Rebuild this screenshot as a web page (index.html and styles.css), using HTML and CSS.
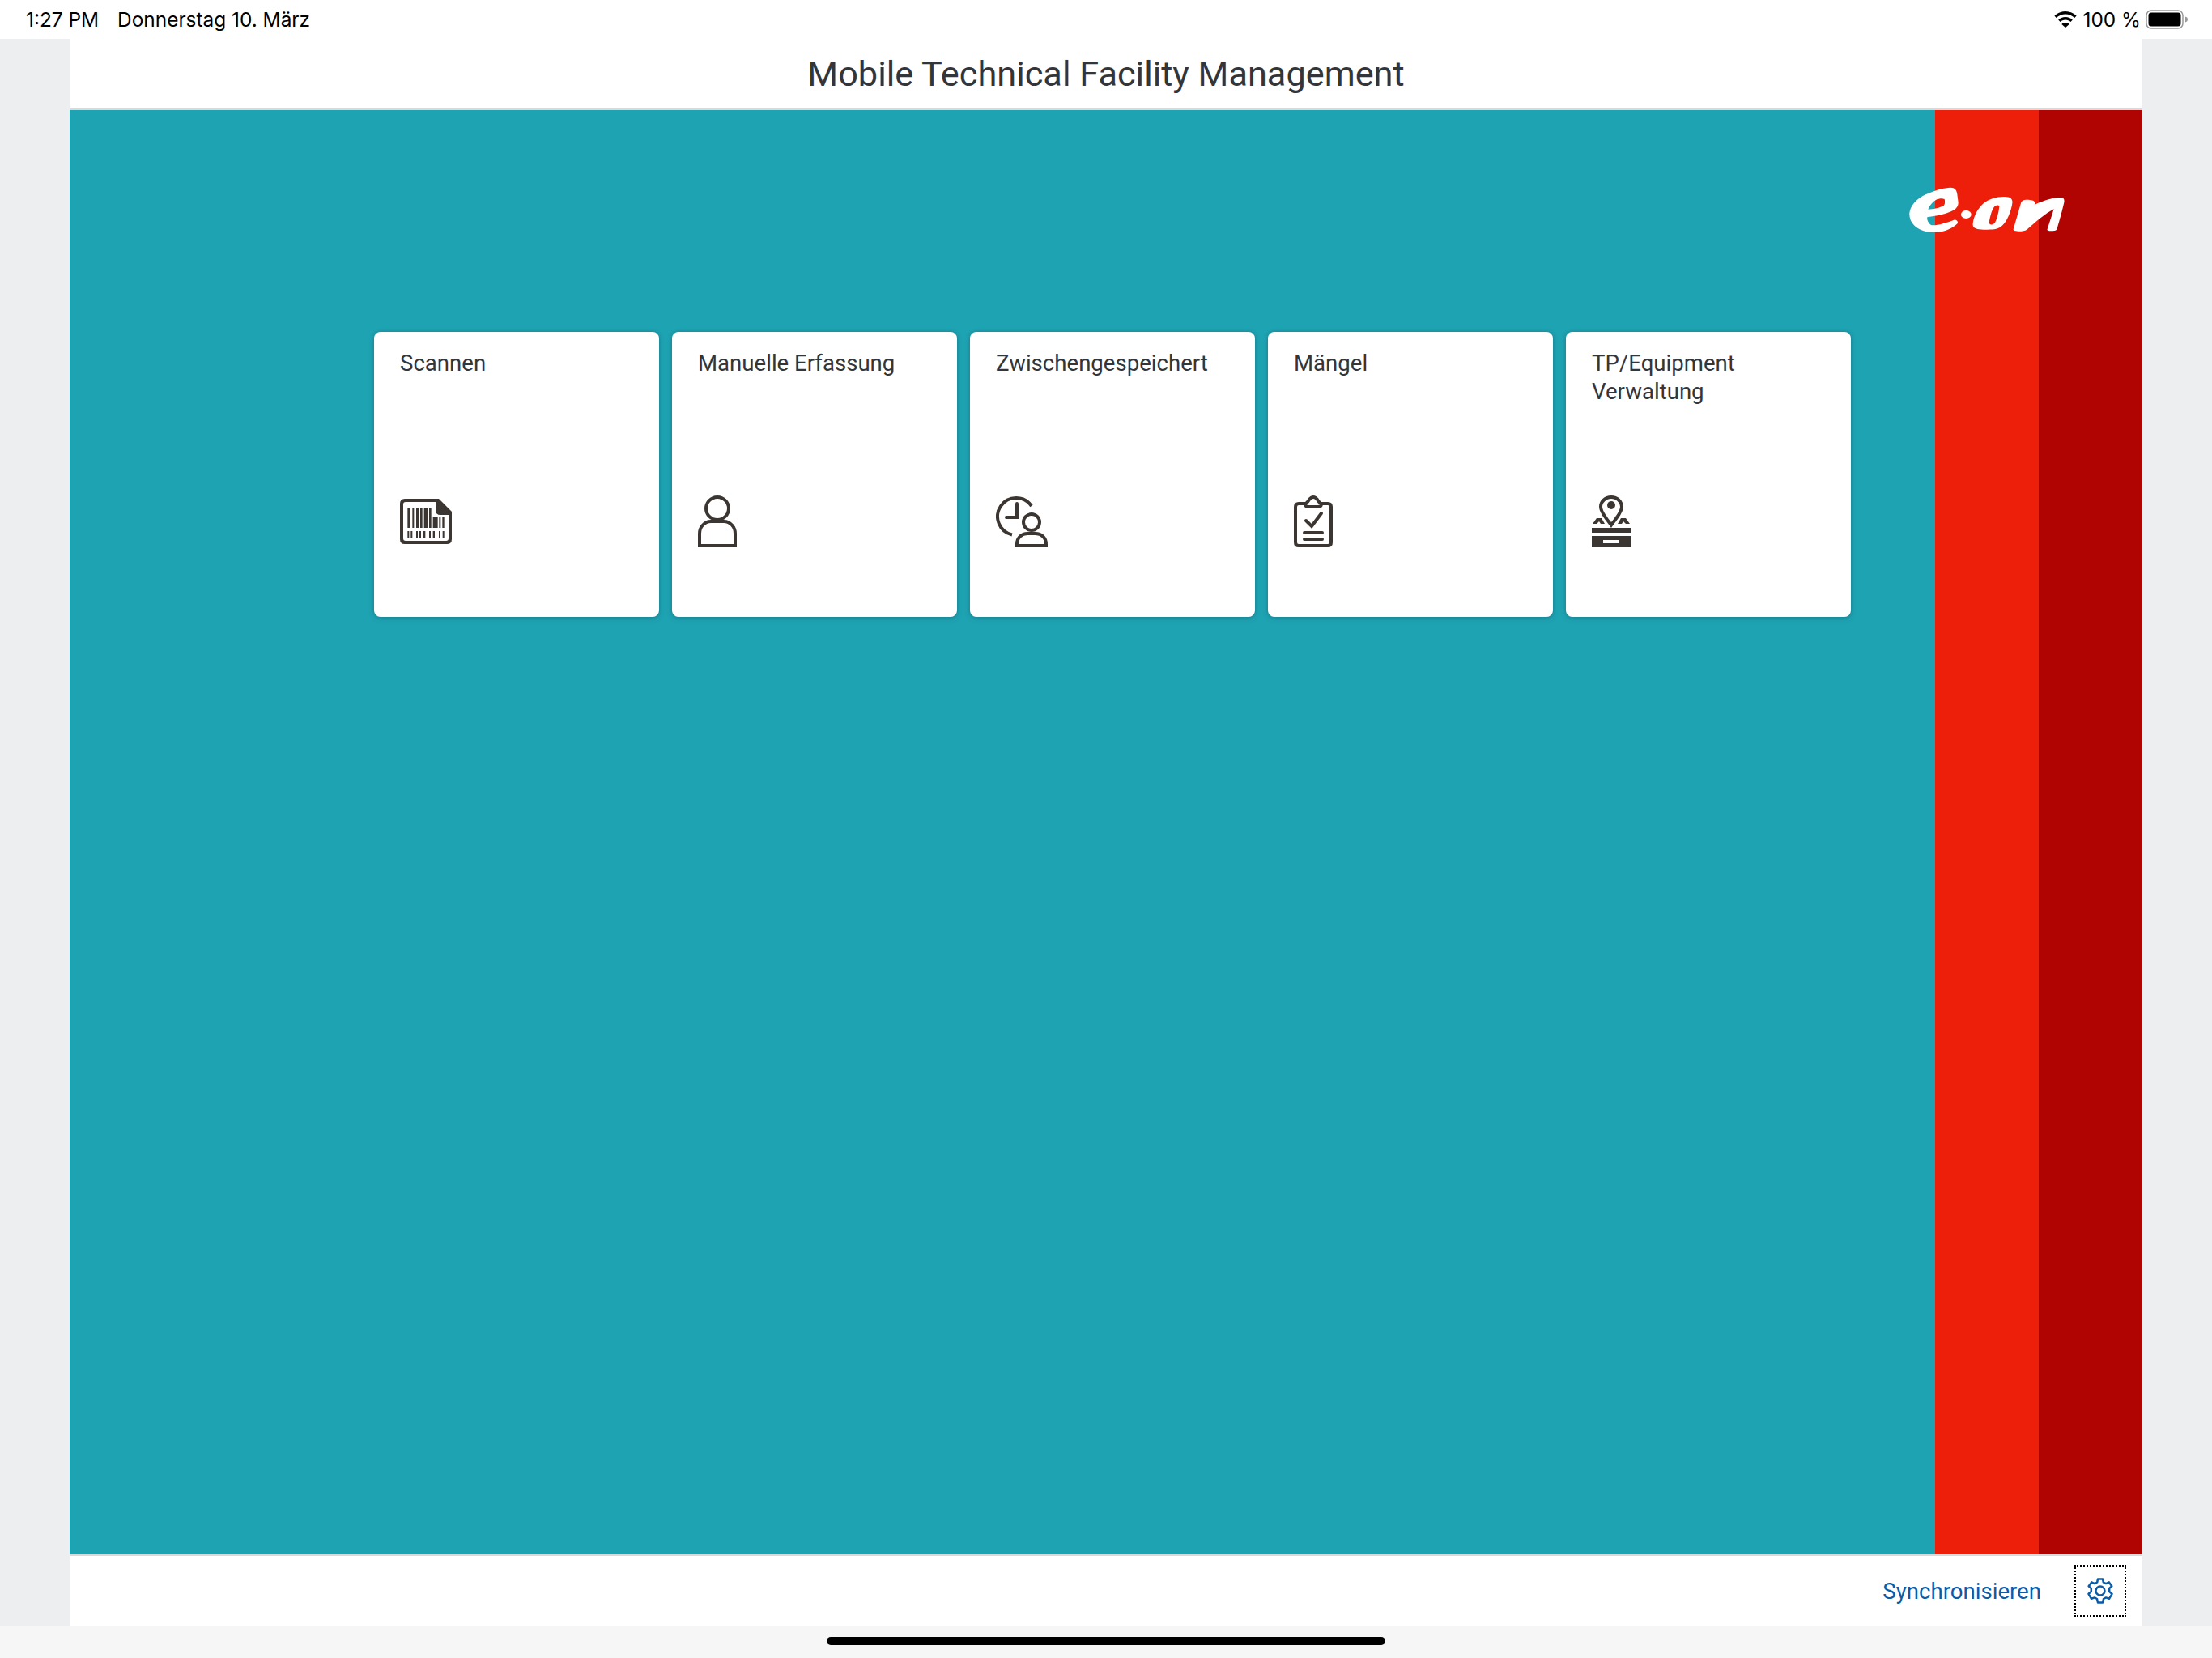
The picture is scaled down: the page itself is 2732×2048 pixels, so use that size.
FILE: index.html
```html
<!DOCTYPE html>
<html lang="de">
<head>
<meta charset="utf-8">
<title>Mobile Technical Facility Management</title>
<link rel="stylesheet" href="styles.css">
</head>
<body>
<div class="status">
  <div class="status-left"><span>1:27 PM</span><span>Donnerstag 10. März</span></div>
  <div class="status-right">
    <svg class="wifi" viewBox="0 0 28 20"><path d="M14 0C8.6 0 3.9 2.2.4 5.6l2.3 2.5C5.600 5.200 9.600 3.500 14 3.500s8.400 1.700 11.300 4.600l2.300-2.500C24.100 2.200 19.400 0 14 0z"/><path d="M14 7c-3.500 0-6.500 1.400-8.800 3.600l2.300 2.500C9.200 11.500 11.500 10.500 14 10.500s4.800 1 6.500 2.600l2.300-2.500C20.500 8.400 17.500 7 14 7z"/><path d="M14 14c-1.900 0-3.500.7-4.700 1.900L14 20l4.700-4.100C17.500 14.700 15.900 14 14 14z"/></svg>
    <span class="battery-pct">100 %</span>
    <svg class="battery" viewBox="0 0 52 24"><rect x="1" y="1" width="45" height="22" rx="6" fill="#fff" stroke="#999" stroke-width="1.500"/><rect x="3.500" y="3.500" width="40" height="17" rx="3.500" fill="#000"/><path d="M49 8.500c1.800.6 3 1.900 3 3.500s-1.200 2.900-3 3.500z" fill="#999"/></svg>
  </div>
</div>

<div class="frame">
  <div class="app">
    <header class="app-header">Mobile Technical Facility Management</header>
    <main class="stage">
      <div class="teal">
        <a class="tile"><div class="tile-title">Scannen</div>
          <div class="tile-icon">
            <svg class="i-barcode" viewBox="132 648 192 168"><path fill-rule="evenodd" d="M150 648H276L324 696V798Q324 816 306 816H150Q132 816 132 798V666Q132 648 150 648ZM153 660Q144 660 144 669V795Q144 804 153 804H303Q312 804 312 795V708H282Q264 708 264 690V660Z"/><path d="M160 684h10v72h-10zM178 684h6v72h-6zM192 684h9v72h-9zM207 684h8v72h-8zM221 684h14v72h-14zM240 684h8v72h-8zM254 717h18v39h-18zM277 717h6v39h-6zM289 717h7v39h-7zM160 768h6v24h-6zM172 768h6v24h-6zM192 768h6v24h-6zM204 768h6v24h-6zM219 768h7v24h-7zM240 768h6v24h-6zM254 768h7v24h-7zM276 768h6v24h-6zM290 768h6v24h-6z"/></svg>
          </div></a>
        <a class="tile"><div class="tile-title">Manuelle Erfassung</div>
          <div class="tile-icon">
            <svg class="i-std i-48" viewBox="0 0 48 64"><circle cx="24" cy="16" r="14"/><path d="M2 62V47C2 39 8 32 16 32H32C40 32 46 39 46 47V62Z"/></svg>
          </div></a>
        <a class="tile"><div class="tile-title">Zwischengespeichert</div>
          <div class="tile-icon">
            <svg class="i-std i-64" viewBox="0 0 64 64"><path d="M44 13A23 23 0 1 0 20 48.500"/><path d="M26 10V27H13" stroke-linecap="round"/><circle cx="44" cy="33" r="10"/><path d="M26 62V60C26 52 32 47 39 47H49C56 47 62 52 62 60V62Z"/></svg>
          </div></a>
        <a class="tile"><div class="tile-title">Mängel</div>
          <div class="tile-icon">
            <svg class="i-std i-48" viewBox="0 0 48 64"><path d="M14 10H6Q2 10 2 14V58Q2 62 6 62H42Q46 62 46 58V14Q46 10 42 10H34"/><path d="M14 10C16 10 17 8 19 5C22 1 26 1 29 5C31 8 32 10 34 10C34 13 32 14 30 14H18C16 14 14 13 14 10Z"/><path d="M15 31L22 38L34 22" stroke-linecap="round"/><path d="M13 46H35M13 54H35" stroke-linecap="round"/></svg>
          </div></a>
        <a class="tile"><div class="tile-title">TP/Equipment Verwaltung</div>
          <div class="tile-icon">
            <svg class="i-pin" viewBox="0 0 48 64"><path fill-rule="evenodd" d="M24 0C15.700 0 9 6 9 14C9 22 20 34 24 40C28 34 39 22 39 14C39 6 32.300 0 24 0ZM24 4C29.800 4 35 8.500 35 14C35 19 28 28 24 33C20 28 13 19 13 14C13 8.500 18.200 4 24 4Z"/><circle cx="24" cy="12" r="5"/><path d="M1 35L6 28H12L16 35H11L9 32L6 35ZM47 35L42 28H36L32 35H37L39 32L42 35Z"/><path d="M0 40H48V46H0Z"/><path fill-rule="evenodd" d="M0 50H48V64H0ZM14 55V59H33V55Z"/></svg>
          </div></a>
      </div>
      <div class="stripe-red"></div>
      <div class="stripe-dark"></div>
      <svg class="logo" viewBox="0 0 660 255"><path fill-rule="evenodd" d="M55 145C58 118 80 92 115 76C145 62 175 52 205 50C222 49 230 58 232 75L236 105C236 118 230 128 215 136C195 147 160 155 121 160C119 168 124 182 135 189C150 193 190 182 220 170C228 168 236 176 234 182C215 200 190 213 155 216C120 218 90 208 72 190C60 178 54 162 55 145ZM124 131C143 131 168 125 182 117C187 113 187 100 185 93C178 89 165 90 154 95C141 102 130 116 124 131Z"/><ellipse cx="265" cy="150" rx="19" ry="15"/><path fill-rule="evenodd" d="M290 185C292 160 305 130 330 108C352 90 385 82 410 84C430 85 438 92 436 108C432 135 420 170 400 190C385 206 360 207 330 206C305 205 288 203 290 185ZM350 180C350 190 366 190 372 180C380 165 386 140 388 120C385 113 373 115 368 123C360 135 354 155 350 180Z"/><path d="M440 205L468 108C471 98 478 95 490 95C505 95 520 97 520 108L518 115C540 102 590 85 618 87C627 88 630 95 628 105C620 140 610 175 601 205C600 210 590 211 580 211C570 211 564 210 566 204L590 130C560 145 520 180 490 206C475 216 438 213 440 205Z"/></svg>
    </main>
    <footer class="app-footer">
      <a class="sync">Synchronisieren</a>
      <span class="gear-btn">
        <svg class="gear" viewBox="0 0 32 32"><path d="M13 1.500H19L19.800 5.500L23 7.100L26.800 5.400L30.300 10.300L27.200 13L27.200 17L30.500 19.800L27 25.800L23 24.400L20 26L19 30.500H13L12 26L9 24.400L5 25.800L1.500 19.800L4.800 17L4.800 13L1.700 10.300L5.200 5.400L9 7.100L12.200 5.500Z"/><circle cx="16" cy="16" r="5.500"/></svg>
      </span>
    </footer>
  </div>
</div>

<div class="home"><div class="home-bar"></div></div>
</body>
</html>
```
FILE: styles.css
```css
* { box-sizing: border-box; }
html, body { margin: 0; height: 100%; }
body {
  width: 2732px;
  height: 2048px;
  display: flex;
  flex-direction: column;
  overflow: hidden;
  background: #f6f6f6;
  font-family: Roboto, "Noto Sans", sans-serif;
  color: #32363a;
}
.status {
  height: 48px;
  background: #fff;
  display: flex;
  align-items: center;
  justify-content: space-between;
  padding: 0 30px 0 32px;
  font-family: Inter, "Liberation Sans", sans-serif;
  font-size: 24.4px;
  color: #000;
}
.status-left { display: flex; gap: 23px; }
.status-right { display: flex; align-items: center; }
.wifi { width: 28px; height: 20px; margin-right: 7px; fill: #000; }
.battery-pct { margin-right: 6px; }
.battery { width: 52px; height: 24px; }
.frame {
  height: 1960px;
  padding: 0 86px;
  background: #edeef0;
}
.app { height: 100%; display: flex; flex-direction: column; background: #fff; }
.app-header {
  height: 88px;
  flex: none;
  border-bottom: 2px solid #d9d9d9;
  display: flex;
  align-items: center;
  justify-content: center;
  font-size: 43.3px;
  color: #32363a;
}
.stage { position: relative; flex: 1; display: flex; min-height: 0; }
.teal {
  flex: 1;
  background: #1ea3b3;
  display: flex;
  align-items: flex-start;
  gap: 16px;
  padding: 274px 0 0 376px;
}
.stripe-red { width: 128px; background: #ee1f0a; }
.stripe-dark { width: 128px; background: #b00402; }
.logo { position: absolute; left: 2254px; top: 79px; width: 220px; height: 85px; fill: #fff; }
.tile {
  width: 352px;
  height: 352px;
  background: #fff;
  border-radius: 8px;
  box-shadow: 0 0 4px rgba(0, 0, 0, .15), 0 2px 8px rgba(0, 0, 0, .12);
  padding: 22px 32px 86px;
  display: flex;
  flex-direction: column;
  justify-content: space-between;
  font-size: 27.6px;
  line-height: 34.5px;
}
.tile-title { color: #32363a; }
.tile-icon { height: 64px; display: flex; align-items: center; }
.i-barcode { width: 64px; height: 56px; fill: #3c3632; }
.i-pin { width: 48px; height: 64px; fill: #3c3632; }
.i-std { height: 64px; fill: none; stroke: #3c3632; stroke-width: 4; }
.i-48 { width: 48px; }
.i-64 { width: 64px; }
.app-footer {
  height: 88px;
  flex: none;
  border-top: 2px solid #d9d9d9;
  display: flex;
  align-items: center;
  justify-content: flex-end;
  gap: 41px;
  padding-right: 20px;
}
.sync { font-size: 27.6px; color: #0a5ca8; }
.gear-btn {
  width: 64px;
  height: 64px;
  border: 2px dotted #000;
  display: flex;
  align-items: center;
  justify-content: center;
}
.gear { width: 32px; height: 32px; fill: none; stroke: #0a5ca8; stroke-width: 2.500; stroke-linejoin: round; }
.home { flex: 1; display: flex; justify-content: center; padding-top: 14px; }
.home-bar { width: 690px; height: 10px; border-radius: 5px; background: #000; }
```
